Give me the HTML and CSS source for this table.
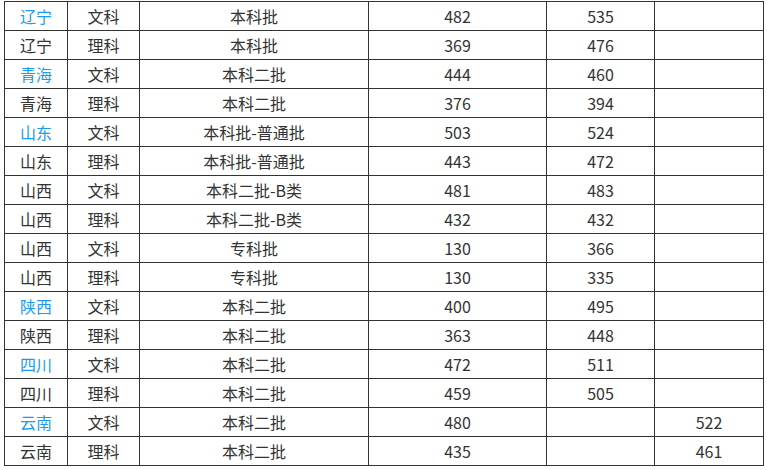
FILE: index.html
```html
<!DOCTYPE html>
<html lang="zh">
<head>
<meta charset="utf-8">
<link rel="stylesheet" href="styles.css">
</head>
<body>
<table class="score-table">
<colgroup>
<col class="c1"><col class="c2"><col class="c3"><col class="c4"><col class="c5"><col class="c6">
</colgroup>
<tbody>
<tr><td class="link">辽宁</td><td>文科</td><td>本科批</td><td>482</td><td>535</td><td></td></tr>
<tr><td>辽宁</td><td>理科</td><td>本科批</td><td>369</td><td>476</td><td></td></tr>
<tr><td class="link">青海</td><td>文科</td><td>本科二批</td><td>444</td><td>460</td><td></td></tr>
<tr><td>青海</td><td>理科</td><td>本科二批</td><td>376</td><td>394</td><td></td></tr>
<tr><td class="link">山东</td><td>文科</td><td>本科批-普通批</td><td>503</td><td>524</td><td></td></tr>
<tr><td>山东</td><td>理科</td><td>本科批-普通批</td><td>443</td><td>472</td><td></td></tr>
<tr><td>山西</td><td>文科</td><td>本科二批-B类</td><td>481</td><td>483</td><td></td></tr>
<tr><td>山西</td><td>理科</td><td>本科二批-B类</td><td>432</td><td>432</td><td></td></tr>
<tr><td>山西</td><td>文科</td><td>专科批</td><td>130</td><td>366</td><td></td></tr>
<tr><td>山西</td><td>理科</td><td>专科批</td><td>130</td><td>335</td><td></td></tr>
<tr><td class="link">陕西</td><td>文科</td><td>本科二批</td><td>400</td><td>495</td><td></td></tr>
<tr><td>陕西</td><td>理科</td><td>本科二批</td><td>363</td><td>448</td><td></td></tr>
<tr><td class="link">四川</td><td>文科</td><td>本科二批</td><td>472</td><td>511</td><td></td></tr>
<tr><td>四川</td><td>理科</td><td>本科二批</td><td>459</td><td>505</td><td></td></tr>
<tr><td class="link">云南</td><td>文科</td><td>本科二批</td><td>480</td><td></td><td>522</td></tr>
<tr><td>云南</td><td>理科</td><td>本科二批</td><td>435</td><td></td><td>461</td></tr>
</tbody>
</table>
</body>
</html>
```
FILE: styles.css
```css
html, body {
  margin: 0;
  padding: 0;
  background: #fff;
}
body {
  padding: 1px 0 0 4px;
}
.score-table {
  border-collapse: collapse;
  table-layout: fixed;
  width: 759px;
  font-family: "Noto Sans CJK SC", "Noto Sans", sans-serif;
  font-size: 16px;
  color: #333;
}
.c1 { width: 63px; }
.c2 { width: 72px; }
.c3 { width: 229px; }
.c4 { width: 178px; }
.c5 { width: 108px; }
.c6 { width: 109px; }
.score-table td {
  border: 1px solid #333;
  height: 28px;
  padding: 0;
  text-align: center;
  vertical-align: middle;
  line-height: 28px;
  white-space: nowrap;
}
.score-table td.link {
  color: #1a9bf0;
}
```
